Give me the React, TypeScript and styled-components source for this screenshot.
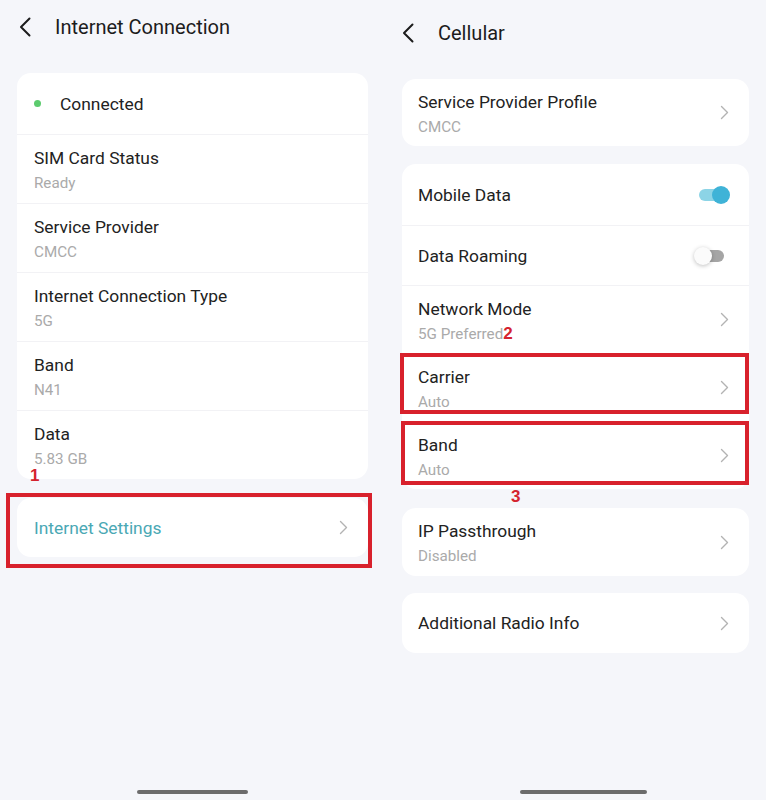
import React from 'react';
import styled, { createGlobalStyle } from 'styled-components';

const GlobalStyle = createGlobalStyle`
  html, body { margin: 0; padding: 0; }
  body {
    background: #f5f6fa;
    font-family: Roboto, Inter, "Noto Sans", sans-serif;
    color: #1f1f1f;
  }
  * { box-sizing: border-box; }
`;

const Screen = styled.div`
  display: flex;
  width: 766px;
  height: 800px;
  overflow: hidden;
  background: #f5f6fa;
`;

const Panel = styled.div<{ $top: number }>`
  position: relative;
  width: 383px;
  height: 800px;
  padding-top: ${p => p.$top}px;
  padding-bottom: 6px;
  display: flex;
  flex-direction: column;
  background: #f5f6fa;
`;

const Header = styled.div`
  display: flex;
  align-items: center;
  gap: 24px;
  height: 40px;
  padding-left: 19px;
  margin-bottom: 26px;
`;

const Title = styled.h1`
  margin: 0;
  font-size: 20px;
  font-weight: 400;
  color: #1c1c1c;
`;

const Card = styled.div<{ $ml: number; $mr: number; $mt?: number }>`
  position: relative;
  margin: ${p => p.$mt ?? 0}px ${p => p.$mr}px 0 ${p => p.$ml}px;
  background: #ffffff;
  border-radius: 14px;
  display: flex;
  flex-direction: column;
`;

const Row = styled.div<{ $h: number; $pl?: number }>`
  position: relative;
  display: flex;
  align-items: center;
  justify-content: space-between;
  height: ${p => p.$h}px;
  padding: 0 20px 0 ${p => p.$pl ?? 16}px;
  & + & {
    border-top: 1px solid #f2f2f5;
  }
`;

const TextCol = styled.div`
  display: flex;
  flex-direction: column;
  padding-top: 2px;
`;

const Label = styled.span<{ $accent?: boolean }>`
  font-size: 17.4px;
  line-height: 22px;
  color: ${p => (p.$accent ? '#4aa8b4' : '#222222')};
`;

const Sub = styled.span`
  margin-top: 4px;
  font-size: 15.2px;
  line-height: 20px;
  color: #aaaaaa;
`;

const Status = styled.div`
  display: flex;
  align-items: center;
  gap: 19px;
`;

const Dot = styled.span`
  width: 7px;
  height: 7px;
  border-radius: 50%;
  background: #5ccb6e;
`;

const Note = styled.span`
  font-family: "Liberation Sans", Arial, sans-serif;
  font-weight: 700;
  font-size: 17px;
  line-height: 17px;
  color: #d4232e;
`;

const FloatNote = styled(Note)<{ $x: number; $y: number }>`
  position: absolute;
  left: ${p => p.$x}px;
  top: ${p => p.$y}px;
`;

const Frame = styled.div`
  position: relative;
  margin: 14px 11px 0 6px;
  padding: 1px 0 7px 7px;
  border: 4px solid #d8212c;
`;

const Outline = styled.div<{ $t: number; $b: number; $l: number; $r: number }>`
  position: absolute;
  top: ${p => p.$t}px;
  bottom: ${p => p.$b}px;
  left: ${p => p.$l}px;
  right: ${p => p.$r}px;
  border: 4px solid #d8212c;
  pointer-events: none;
`;

const Switch = styled.div<{ $on: boolean }>`
  position: relative;
  width: 36px;
  height: 20px;
  &::before {
    content: '';
    position: absolute;
    top: 4px;
    height: 12px;
    border-radius: 6px;
    left: ${p => (p.$on ? 5 : 8)}px;
    right: ${p => (p.$on ? 1 : 6)}px;
    background: ${p => (p.$on ? '#8cd4e6' : '#a5a5a5')};
  }
  &::after {
    content: '';
    position: absolute;
    top: 1px;
    width: 18px;
    height: 18px;
    border-radius: 50%;
    ${p => (p.$on ? 'right: 0;' : 'left: 0;')}
    background: ${p => (p.$on ? '#3fb3d7' : '#fbfbfb')};
    box-shadow: ${p => (p.$on ? 'none' : '0 1px 4px rgba(0,0,0,0.25)')};
  }
`;

const HomeBar = styled.div<{ $shift: number; $w: number }>`
  margin-top: auto;
  align-self: center;
  transform: translateX(${p => p.$shift}px);
  width: ${p => p.$w}px;
  height: 4px;
  border-radius: 2px;
  background: #6c6c6c;
`;

const Back = () => (
  <svg width="12" height="20" viewBox="0 0 12 20" fill="none">
    <path d="M10.5 1.5 L2 10 L10.5 18.5" stroke="#1c1c1c" strokeWidth="2" strokeLinecap="round" strokeLinejoin="round" />
  </svg>
);

const Chevron = () => (
  <svg width="9" height="15" viewBox="0 0 9 15" fill="none">
    <path d="M1.5 1.5 L7.5 7.5 L1.5 13.5" stroke="#b3b3b3" strokeWidth="1.4" strokeLinecap="round" strokeLinejoin="round" />
  </svg>
);

const infoRows = [
  { label: 'SIM Card Status', value: 'Ready' },
  { label: 'Service Provider', value: 'CMCC' },
  { label: 'Internet Connection Type', value: '5G' },
  { label: 'Band', value: 'N41' },
  { label: 'Data', value: '5.83 GB' },
];

export default function App() {
  return (
    <Screen>
      <GlobalStyle />
      <Panel $top={7}>
        <Header>
          <Back />
          <Title>Internet Connection</Title>
        </Header>
        <Card $ml={17} $mr={15}>
          <Row $h={61} $pl={17}>
            <Status>
              <Dot />
              <Label>Connected</Label>
            </Status>
          </Row>
          {infoRows.map(r => (
            <Row key={r.label} $h={69} $pl={17}>
              <TextCol>
                <Label>{r.label}</Label>
                <Sub>{r.value}</Sub>
              </TextCol>
            </Row>
          ))}
        </Card>
        <Frame>
          <FloatNote $x={20} $y={-30}>1</FloatNote>
          <Card $ml={0} $mr={0}>
            <Row $h={59} $pl={17}>
              <Label $accent>Internet Settings</Label>
              <Chevron />
            </Row>
          </Card>
        </Frame>
        <HomeBar $shift={1} $w={111} />
      </Panel>

      <Panel $top={13}>
        <Header>
          <Back />
          <Title>Cellular</Title>
        </Header>
        <Card $ml={19} $mr={17}>
          <Row $h={67}>
            <TextCol>
              <Label>Service Provider Profile</Label>
              <Sub>CMCC</Sub>
            </TextCol>
            <Chevron />
          </Row>
        </Card>
        <Card $ml={19} $mr={17} $mt={18}>
          <Row $h={61} style={{ paddingRight: 19 }}>
            <Label>Mobile Data</Label>
            <Switch $on />
          </Row>
          <Row $h={60} style={{ paddingRight: 19 }}>
            <Label>Data Roaming</Label>
            <Switch $on={false} />
          </Row>
          <Row $h={68}>
            <TextCol>
              <Label>Network Mode</Label>
              <Sub>
                5G Preferred<Note>2</Note>
              </Sub>
            </TextCol>
            <Chevron />
          </Row>
          <Row $h={68}>
            <Outline $t={-1} $b={7} $l={-2} $r={0} />
            <TextCol>
              <Label>Carrier</Label>
              <Sub>Auto</Sub>
            </TextCol>
            <Chevron />
          </Row>
          <Row $h={68}>
            <Outline $t={-1} $b={4} $l={-1} $r={0} />
            <FloatNote $x={109} $y={66}>3</FloatNote>
            <TextCol>
              <Label>Band</Label>
              <Sub>Auto</Sub>
            </TextCol>
            <Chevron />
          </Row>
        </Card>
        <Card $ml={19} $mr={17} $mt={19}>
          <Row $h={68}>
            <TextCol>
              <Label>IP Passthrough</Label>
              <Sub>Disabled</Sub>
            </TextCol>
            <Chevron />
          </Row>
        </Card>
        <Card $ml={19} $mr={17} $mt={17}>
          <Row $h={60}>
            <Label>Additional Radio Info</Label>
            <Chevron />
          </Row>
        </Card>
        <HomeBar $shift={9} $w={127} />
      </Panel>
    </Screen>
  );
}
